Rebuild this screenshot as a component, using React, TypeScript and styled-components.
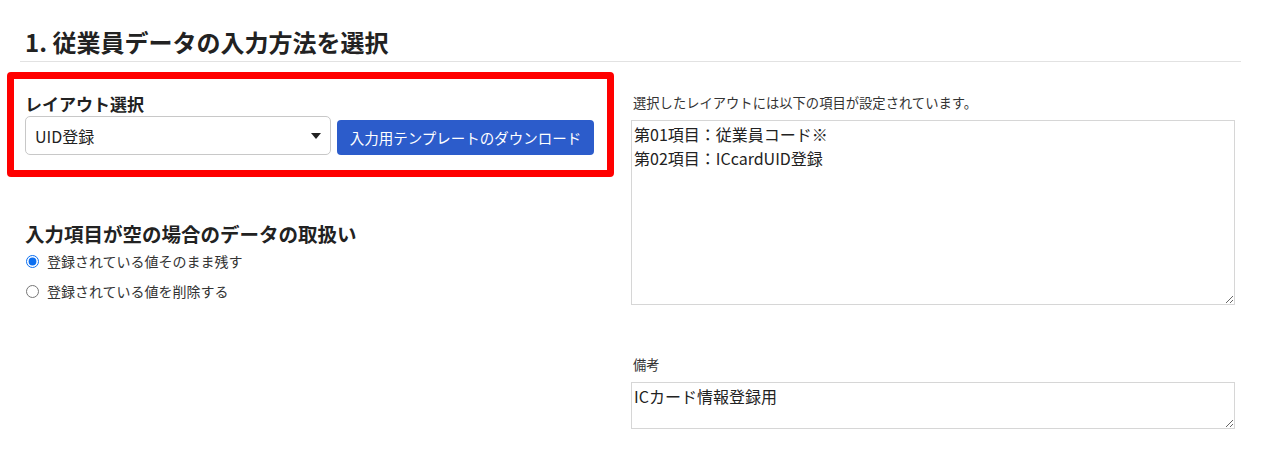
import styled, { createGlobalStyle } from 'styled-components';

const GlobalStyle = createGlobalStyle`
  body {
    margin: 0;
    background: #fff;
    font-family: "Noto Sans CJK JP", "Noto Sans", sans-serif;
    color: #333;
  }
`

export default function App() {
  return (
    <>
      <GlobalStyle />
      <Page>
        <Title>1. 従業員データの入力方法を選択</Title>
        <Columns>
          <LeftColumn>
            <Highlight>
              <FieldLabel>レイアウト選択</FieldLabel>
              <SelectRow>
                <SelectWrap>
                  <Select defaultValue="uid">
                    <option value="uid">UID登録</option>
                  </Select>
                </SelectWrap>
                <Button type="button">入力用テンプレートのダウンロード</Button>
              </SelectRow>
            </Highlight>

            <SubHeading>入力項目が空の場合のデータの取扱い</SubHeading>
            <RadioRow>
              <Radio type="radio" name="empty" defaultChecked />
              登録されている値そのまま残す
            </RadioRow>
            <RadioRow>
              <Radio type="radio" name="empty" />
              登録されている値を削除する
            </RadioRow>
          </LeftColumn>

          <RightColumn>
            <Caption>選択したレイアウトには以下の項目が設定されています。</Caption>
            <TextArea
              $height={185}
              readOnly
              defaultValue={'第01項目：従業員コード※\n第02項目：ICcardUID登録'}
            />
            <Caption $top={50}>備考</Caption>
            <TextArea $height={47} defaultValue="ICカード情報登録用" />
          </RightColumn>
        </Columns>
      </Page>
    </>
  );
}

const Page = styled.div`
  padding: 0 33px 0 7px;
`

const Title = styled.h2`
  margin: 0 0 0 13px;
  padding: 25px 5px 2px;
  border-bottom: 1px solid #e2e2e2;
  font-size: 24px;
  line-height: 34px;
  font-weight: 700;
  color: #222;
`

const Columns = styled.div`
  display: grid;
  grid-template-columns: 607px 604px;
  column-gap: 17px;
  margin-top: 10px;
`

const LeftColumn = styled.div`
  display: flex;
  flex-direction: column;
`

const Highlight = styled.div`
  border: 7px solid #f00;
  border-radius: 4px;
  padding: 13px 13px 15px 11px;
`

const FieldLabel = styled.div`
  font-size: 17px;
  line-height: 24px;
  font-weight: 700;
  color: #222;
`

const SelectRow = styled.div`
  display: flex;
  align-items: flex-end;
  gap: 6px;
`

const SelectWrap = styled.div`
  position: relative;
  width: 306px;

  &::after {
    content: "";
    position: absolute;
    right: 10px;
    top: 17px;
    border-left: 5px solid transparent;
    border-right: 5px solid transparent;
    border-top: 6px solid #222;
    pointer-events: none;
  }
`

const Select = styled.select`
  appearance: none;
  display: block;
  width: 100%;
  height: 39px;
  padding: 0 28px 0 9px;
  border: 1px solid #c8c8c8;
  border-radius: 5px;
  background: #fff;
  font-family: inherit;
  font-size: 16px;
  color: #222;
`

const Button = styled.button`
  height: 35px;
  width: 257px;
  padding: 0;
  border: none;
  border-radius: 4px;
  background: #2c5ccb;
  color: #fff;
  font-family: inherit;
  font-size: 14.5px;
  cursor: pointer;
`

const SubHeading = styled.h3`
  margin: 44px 0 0 18px;
  font-size: 19.5px;
  line-height: 25px;
  font-weight: 700;
  color: #222;
`

const RadioRow = styled.label`
  display: flex;
  align-items: center;
  height: 30px;
  margin-left: 19px;
  font-size: 14px;
  color: #333;
`

const Radio = styled.input`
  width: 13px;
  height: 13px;
  margin: 0 8px 0 0;
  accent-color: #0b6ef0;
`

const RightColumn = styled.div`
  display: flex;
  flex-direction: column;
`

const Caption = styled.div<{ $top?: number }>`
  margin: ${p => p.$top ?? 21}px 0 7px 2px;
  font-size: 13.3px;
  line-height: 20px;
  color: #333;
`

const TextArea = styled.textarea<{ $height: number }>`
  display: block;
  box-sizing: border-box;
  width: 604px;
  height: ${p => p.$height}px;
  margin: 0;
  padding: 1px 2px;
  border: 1px solid #d6d6d6;
  font-family: inherit;
  font-size: 16px;
  line-height: 24px;
  color: #222;
  resize: vertical;
  outline: none;
`
